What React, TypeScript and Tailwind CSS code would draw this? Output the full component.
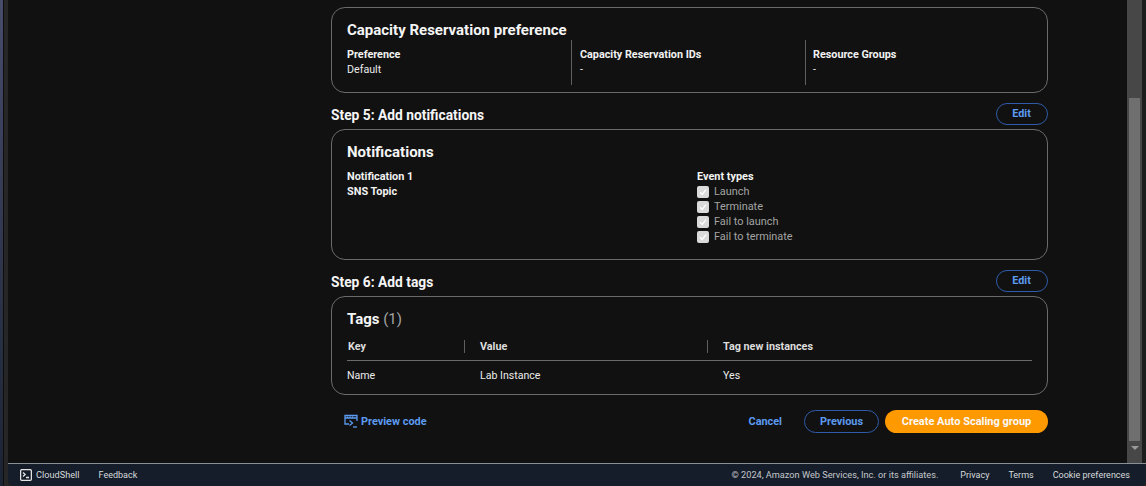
import React from "react";

const F = "[font-family:Roboto,sans-serif]";

function Check() {
  return (
    <span className="flex h-3 w-3 items-center justify-center rounded-[2px] bg-[#dadada]">
      <svg width="10" height="10" viewBox="0 0 10 10" fill="none">
        <path d="M2 5.2 4.2 7.4 8 2.6" stroke="#ffffff" strokeWidth="1.4" />
      </svg>
    </span>
  );
}

function EditBtn() {
  return (
    <button className="flex h-[22px] w-[52px] items-center justify-center rounded-full border border-[#2f5ba8] pr-px text-[10.8px] font-bold text-[#5c9bf0]">
      Edit
    </button>
  );
}

function Head({ title }: { title: string }) {
  return (
    <div className="flex h-[36px] items-center justify-between pt-[10px] pb-[4px]">
      <h2 className="pt-px text-[13.8px] leading-[18px] font-bold text-[#f5f5f5]">{title}</h2>
      <EditBtn />
    </div>
  );
}

function Col({ label, value, pad }: { label: string; value: string; pad?: string }) {
  return (
    <div className={`h-full pt-[7px] ${pad ?? ""}`}>
      <div className="text-[10.8px] leading-[15px] font-bold text-[#f2f2f2]">{label}</div>
      <div className="text-[10.7px] leading-[15px] text-[#ececec]">{value}</div>
    </div>
  );
}

export default function App() {
  return (
    <div className={`${F} flex h-[486px] w-[1146px] overflow-hidden bg-[#222222]`}>
      <div className="w-[3px] bg-linear-to-b from-[#474c6c] to-[#1b2433]" />
      <div className="w-px bg-[#0d0d0d]" />
      <div className="w-[4px] bg-[#262626]" />
      <div className="flex w-[1138px] flex-col">
        <div className="flex h-[463px] bg-[#111111]">
          <main className="ml-[323px] w-[717px] pt-[7px]">
            <section className="h-[86px] rounded-[14px] border border-[#6b6b6b] px-[15px] pt-[12px]">
              <h3 className="text-[15px] leading-[20px] font-bold text-[#f5f5f5]">Capacity Reservation preference</h3>
              <div className="flex h-[45px]">
                <div className="w-[224px]"><Col label="Preference" value="Default" /></div>
                <div className="w-[234px]"><Col label="Capacity Reservation IDs" value="-" pad="border-l border-[#5f5f5f] pl-2" /></div>
                <div className="flex-1"><Col label="Resource Groups" value="-" pad="border-l border-[#5f5f5f] pl-[7px]" /></div>
              </div>
            </section>
            <Head title="Step 5: Add notifications" />
            <section className="h-[131px] rounded-[14px] border border-[#6b6b6b] px-[15px] pt-[12px]">
              <h3 className="text-[15px] leading-[20px] font-bold text-[#f5f5f5]">Notifications</h3>
              <div className="mt-[7px] flex">
                <div className="w-[350px] text-[10.9px] leading-[15px] font-bold text-[#f2f2f2]">
                  <div>Notification 1</div>
                  <div>SNS Topic</div>
                </div>
                <div className="text-[10.9px] leading-[15px]">
                  <div className="font-bold text-[#f2f2f2]">Event types</div>
                  {["Launch", "Terminate", "Fail to launch", "Fail to terminate"].map((t) => (
                    <div key={t} className="flex h-[15px] items-center gap-[5px] text-[#a3a3a3]">
                      <Check />
                      <span>{t}</span>
                    </div>
                  ))}
                </div>
              </div>
            </section>
            <Head title="Step 6: Add tags" />
            <section className="h-[99px] rounded-[14px] border border-[#6b6b6b] px-[15px] pt-[12px]">
              <h3 className="text-[15px] leading-[20px] font-bold text-[#f5f5f5]">
                Tags <span className="font-normal text-[#a3a3a3]">(1)</span>
              </h3>
              <div className="mt-[11px] flex h-[21px] items-start border-b border-[#6b6b6b] text-[10.8px] leading-[13px] font-bold text-[#dddddd]">
                <div className="w-[117px] pl-px">Key</div>
                <div className="w-[243px] border-l border-[#5f5f5f] pl-[15px]">Value</div>
                <div className="border-l border-[#5f5f5f] pl-[15px]">Tag new instances</div>
              </div>
              <div className="flex h-[29px] items-center text-[10.6px] text-[#ececec]">
                <div className="w-[133px]">Name</div>
                <div className="w-[243px]">Lab Instance</div>
                <div>Yes</div>
              </div>
            </section>
            <div className="mt-[15px] flex h-[23px] items-center justify-between">
              <button className="ml-[13px] flex items-center gap-[3px] text-[10.9px] font-bold text-[#5c9bf0]">
                <svg width="14" height="14" viewBox="0 0 14 14" fill="none" stroke="#5c9bf0" strokeWidth="1.3">
                  <path d="M5 10H1V1.5h12V7" />
                  <path d="M1 4h12M3.5 2.5v1.5M6 2.5v1.5M8.5 2.5v1.5" />
                  <path d="m5.5 6.5 3 2.5-3 2.5" />
                  <path d="M9 13h4" />
                </svg>
                <span className="pt-px">Preview code</span>
              </button>
              <div className="flex items-center">
                <button className="mr-[22px] pt-px text-[10.9px] font-bold text-[#5c9bf0]">Cancel</button>
                <button className="mr-[6px] h-[23px] w-[75px] rounded-full border border-[#2f5ba8] pt-px text-[10.9px] font-bold text-[#5c9bf0]">Previous</button>
                <button className="h-[23px] w-[163px] rounded-full bg-[#ff9900] pt-px text-[11px] font-bold text-[#f8f8f8]">Create Auto Scaling group</button>
              </div>
            </div>
          </main>
          <div className="ml-[79px] flex w-[15px] flex-col items-center bg-[#474747] pt-[98px] pb-[13px]">
            <div className="h-[349px] w-[11px] bg-[#6f6f6f]" />
            <div className="mt-[5px] h-0 w-0 border-x-[4px] border-t-[4px] border-x-transparent border-t-[#9a9a9a]" />
          </div>
          <div className="w-[4px] bg-[#1d1d1d]" />
        </div>
        <footer className="flex h-[23px] items-center rounded-b-[6px] border-t border-[#8a8f96] bg-[#161d2a] pr-4 pl-3 text-[9.2px] leading-[14px] text-[#d5dbdb]">
          <svg width="12" height="12" viewBox="0 0 12 12" fill="none" stroke="#e4e4e4" strokeWidth="1.3">
            <rect x="0.6" y="0.6" width="10.8" height="10.8" rx="1.5" />
            <path d="m3 3.5 2.2 2-2.2 2M6 8.5h3" />
          </svg>
          <span className="ml-[4px]">CloudShell</span>
          <span className="ml-[19px] text-[9px] leading-[14px]">Feedback</span>
          <span className="ml-auto text-[#c4c8cc]">© 2024, Amazon Web Services, Inc. or its affiliates.</span>
          <span className="ml-[22px] text-[9px] leading-[14px]">Privacy</span>
          <span className="ml-[19px] text-[9px] leading-[14px]">Terms</span>
          <span className="ml-[19px] text-[9px] leading-[14px]">Cookie preferences</span>
        </footer>
      </div>
    </div>
  );
}
